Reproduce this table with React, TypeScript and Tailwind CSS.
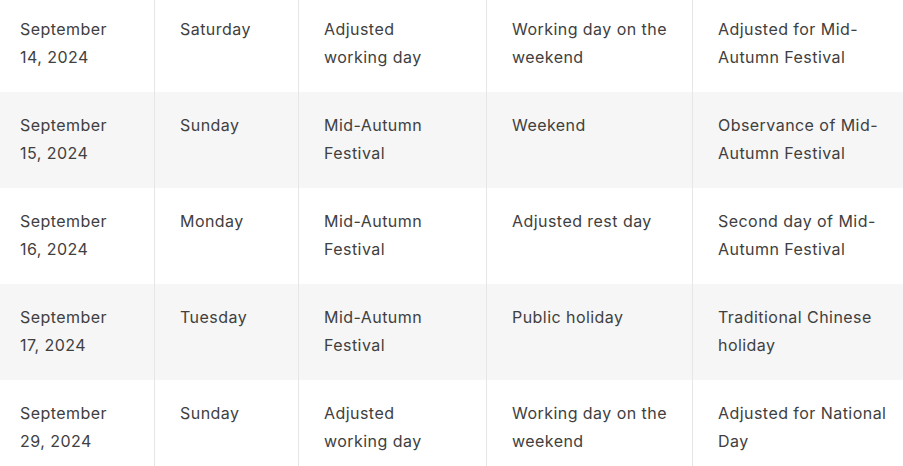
import React from "react";

const rows: string[][][] = [
  [["September", "14, 2024"], ["Saturday"], ["Adjusted", "working day"], ["Working day on the", "weekend"], ["Adjusted for Mid-", "Autumn Festival"]],
  [["September", "15, 2024"], ["Sunday"], ["Mid-Autumn", "Festival"], ["Weekend"], ["Observance of Mid-", "Autumn Festival"]],
  [["September", "16, 2024"], ["Monday"], ["Mid-Autumn", "Festival"], ["Adjusted rest day"], ["Second day of Mid-", "Autumn Festival"]],
  [["September", "17, 2024"], ["Tuesday"], ["Mid-Autumn", "Festival"], ["Public holiday"], ["Traditional Chinese", "holiday"]],
  [["September", "29, 2024"], ["Sunday"], ["Adjusted", "working day"], ["Working day on the", "weekend"], ["Adjusted for National", "Day"]],
];

function Cell({ lines, className }: { lines: string[]; className: string }) {
  return (
    <div className={className}>
      {lines.map((l, i) => (
        <span key={i} className="block whitespace-nowrap">
          {l}
        </span>
      ))}
    </div>
  );
}

export default function App() {
  return (
    <div
      className="w-[903px] overflow-hidden bg-white text-[16px] leading-[28px] tracking-[0.45px] text-[#404040] -mt-1"
      style={{ fontFamily: "Inter, 'Noto Sans', sans-serif" }}
    >
      {rows.map((r, i) => (
        <div key={i} className={`flex h-24 ${i % 2 === 1 ? "bg-[#f6f6f6]" : "bg-white"}`}>
          <Cell lines={r[0]} className="w-[154px] shrink-0 pl-5 pt-[19px]" />
          <Cell lines={r[1]} className="w-[144px] shrink-0 border-l border-[#e6e6e6] pl-[25px] pt-[19px]" />
          <Cell lines={r[2]} className="w-[188px] shrink-0 border-l border-[#e6e6e6] pl-[25px] pt-[19px]" />
          <Cell lines={r[3]} className="w-[206px] shrink-0 border-l border-[#e6e6e6] pl-[25px] pt-[19px]" />
          <Cell lines={r[4]} className="flex-1 border-l border-[#e6e6e6] pl-[25px] pt-[19px]" />
        </div>
      ))}
    </div>
  );
}
